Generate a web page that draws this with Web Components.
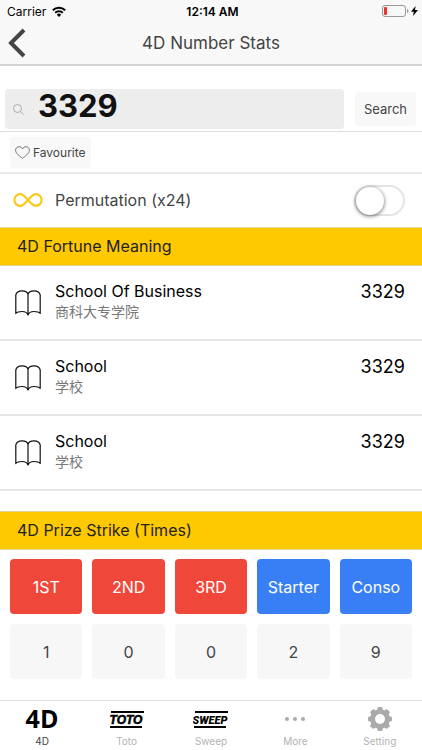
<!DOCTYPE html>
<html lang="en">
<head>
<meta charset="UTF-8">
<meta name="viewport" content="width=device-width, initial-scale=1">
<title>4D Number Stats</title>
<style>
    :root {
        --bar-bg: #f8f8f8;
        --line: #dedede;
        --gold: #ffc900;
        --text: #444;
        --red: #ef473a;
        --blue: #387ef5;
    }

    * { box-sizing: border-box; }

    body {
        margin: 0;
        min-height: 100vh;
        display: flex;
        flex-direction: column;
        background: #fff;
        color: var(--text);
        font-family: Inter, "Noto Sans CJK SC", sans-serif;
        font-size: 16px;
    }

    main { flex: 1; }
</style>
</head>
<body>
    <status-bar carrier="Carrier" time="12:14 AM"></status-bar>
    <nav-header>4D Number Stats</nav-header>
    <main>
        <search-bar value="3329"></search-bar>
        <favourite-bar>Favourite</favourite-bar>
        <toggle-row>Permutation (x24)</toggle-row>
        <section-divider>4D Fortune Meaning</section-divider>
        <meaning-item number="3329">School Of Business<span slot="note" lang="zh">商科大专学院</span></meaning-item>
        <meaning-item number="3329">School<span slot="note" lang="zh">学校</span></meaning-item>
        <meaning-item number="3329">School<span slot="note" lang="zh">学校</span></meaning-item>
        <section-divider class="spaced">4D Prize Strike (Times)</section-divider>
        <prize-grid>
            <prize-cell count="1">1ST</prize-cell>
            <prize-cell count="0">2ND</prize-cell>
            <prize-cell count="0">3RD</prize-cell>
            <prize-cell count="2" color="blue">Starter</prize-cell>
            <prize-cell count="9" color="blue">Conso</prize-cell>
        </prize-grid>
    </main>
    <tab-bar>
        <tab-item active>
            <svg slot="icon" width="40" height="36" viewBox="0 0 40 36"><text x="20" y="27" text-anchor="middle" font-family="Open Sans, sans-serif" font-weight="700" font-size="25" fill="#000">4D</text></svg>
            4D
        </tab-item>
        <tab-item>
            <svg slot="icon" width="36" height="24" viewBox="0 0 36 24"><path d="M2 4h33v2H2zM1 19h32v2H1z"/><text x="17" y="17" text-anchor="middle" font-family="Liberation Sans, sans-serif" font-style="italic" font-weight="700" font-size="12" stroke="#000" stroke-width=".6">TOTO</text></svg>
            Toto
        </tab-item>
        <tab-item>
            <svg slot="icon" width="36" height="24" viewBox="0 0 36 24"><path d="M2 4h33v2H2zM1 19h32v2H1z"/><text x="17" y="17" text-anchor="middle" font-family="Roboto, sans-serif" font-style="italic" font-weight="900" font-size="11">SWEEP</text></svg>
            Sweep
        </tab-item>
        <tab-item>
            <svg slot="icon" width="24" height="24" viewBox="0 0 24 24" fill="#aaa"><circle cx="4" cy="12" r="2"/><circle cx="12" cy="12" r="2"/><circle cx="20" cy="12" r="2"/></svg>
            More
        </tab-item>
        <tab-item>
            <svg slot="icon" width="26" height="26" viewBox="-13 -13 26 26">
                <g fill="#aaa">
                    <path id="cog" d="M-2.8-9.5Q-2.6-12-1.6-12H1.6Q2.6-12 2.8-9.5V9.5Q2.6 12 1.6 12H-1.6Q-2.6 12-2.8 9.5Z"/>
                    <use href="#cog" transform="rotate(45)"/><use href="#cog" transform="rotate(90)"/><use href="#cog" transform="rotate(135)"/>
                    <circle r="9.8"/>
                </g>
                <circle r="5" fill="#fff"/>
            </svg>
            Setting
        </tab-item>
    </tab-bar>

<script>
/**
 * Small base class: attaches the shadow root and fills it once connected.
 */
class BaseElement extends HTMLElement {
    constructor() {
        super();
        this.attachShadow({ mode: 'open' });
    }

    connectedCallback() {
        this.shadowRoot.innerHTML = `
            <style>
                * { box-sizing: border-box; }
                :host { display: block; box-sizing: border-box; }
                button, input { font-family: inherit; color: inherit; margin: 0; border: none; }
                svg { display: block; flex: none; }
            </style>
            ${this.template()}
        `;
    }
}

class StatusBar extends BaseElement {
    template() {
        return `
            <style>
                :host {
                    display: grid;
                    grid-template-columns: 1fr auto 1fr;
                    align-items: center;
                    height: 22px;
                    padding: 0 4px 0 7px;
                    background: var(--bar-bg);
                    color: #000;
                    font-size: 12px;
                }
                .side { display: flex; align-items: center; gap: 6px; }
                .right { justify-content: flex-end; gap: 2px; }
                .time { font-weight: 600; }
            </style>
            <div class="side">
                <span>${this.getAttribute('carrier')}</span>
                <svg width="14" height="11" viewBox="0 0 14 11" fill="none" stroke="#000" stroke-width="2">
                    <path d="M.8 4.2a8.8 8.8 0 0 1 12.4 0M3.2 6.8a5.4 5.4 0 0 1 7.6 0"/>
                    <path d="M7 11 4.8 8.7a3.1 3.1 0 0 1 4.4 0z" fill="#000" stroke="none"/>
                </svg>
            </div>
            <span class="time">${this.getAttribute('time')}</span>
            <div class="side right">
                <svg width="27" height="12" viewBox="0 0 27 12">
                    <rect x=".5" y=".5" width="23" height="11" rx="2.5" fill="none" stroke="#999"/>
                    <rect x="2" y="2" width="3" height="8" rx="1" fill="#f0312b"/>
                    <path d="M25 4q1.5 0 1.5 2T25 8z" fill="#999"/>
                </svg>
                <svg width="7" height="10" viewBox="0 0 7 10"><path d="M4.6 0 0 5.7h2.8L2 10l5-5.9H4z"/></svg>
            </div>
        `;
    }
}

class NavHeader extends BaseElement {
    template() {
        return `
            <style>
                :host {
                    display: grid;
                    grid-template-columns: 44px 1fr 44px;
                    align-items: center;
                    height: 44px;
                    background: var(--bar-bg);
                    border-bottom: 2px solid #d4d4d4;
                }
                button { height: 42px; padding: 0 8px; background: none; }
                h1 { margin: 0; font-size: 17px; font-weight: 400; text-align: center; }
            </style>
            <button aria-label="Back">
                <svg width="18" height="30" viewBox="0 0 18 30" fill="none" stroke="#444" stroke-width="4"><path d="M16 2 3 15l13 13"/></svg>
            </button>
            <h1><slot></slot></h1>
        `;
    }
}

class SearchBar extends BaseElement {
    template() {
        return `
            <style>
                :host { padding: 23px 6px 2px 5px; border-bottom: 1px solid var(--line); }
                form { display: flex; align-items: center; gap: 11px; }
                label {
                    flex: 1;
                    min-width: 0;
                    display: flex;
                    align-items: center;
                    gap: 14px;
                    height: 40px;
                    padding: 0 8px;
                    border-radius: 4px;
                    background: #ededed;
                }
                input {
                    flex: 1;
                    min-width: 0;
                    height: 40px;
                    padding: 0 0 8px;
                    background: none;
                    color: #111;
                    font-size: 31px;
                    font-weight: 700;
                    outline: none;
                }
                button {
                    flex: none;
                    width: 61px;
                    height: 34px;
                    padding: 0;
                    border-radius: 4px;
                    background: var(--bar-bg);
                    font-size: 13px;
                }
            </style>
            <form>
                <label>
                    <svg width="11" height="11" viewBox="0 0 11 11" fill="none" stroke="#aaa"><circle cx="4.5" cy="4.5" r="4"/><path d="m7.5 7.5 3 3"/></svg>
                    <input type="text" aria-label="4D number" value="${this.getAttribute('value')}">
                </label>
                <button type="button">Search</button>
            </form>
        `;
    }
}

class FavouriteBar extends BaseElement {
    template() {
        return `
            <style>
                :host { padding: 5px 10px 4px; border-bottom: 2px solid #e8e8e8; }
                button {
                    display: flex;
                    align-items: center;
                    gap: 3px;
                    height: 31px;
                    padding: 0 5px;
                    border-radius: 4px;
                    background: var(--bar-bg);
                    font-size: 12px;
                }
            </style>
            <button type="button">
                <svg width="15" height="13" viewBox="0 0 15 13" fill="none" stroke="#555" stroke-width=".8"><path d="M7.500 12.300C5 10.400.6 7.400.6 4.200.6 2.200 2.100.7 4 .7c1.500 0 2.800.8 3.500 2.200C8.200 1.500 9.500.7 11 .7c1.900 0 3.400 1.500 3.400 3.500 0 3.200-4.400 6.200-6.900 8.100z"/></svg>
                <slot></slot>
            </button>
        `;
    }
}

class ToggleRow extends BaseElement {
    template() {
        return `
            <style>
                label { display: flex; align-items: center; height: 53px; padding: 0 17px 1px 13px; }
                .text { flex: 1; padding-left: 12px; }
                input {
                    appearance: none;
                    display: flex;
                    width: 51px;
                    height: 31px;
                    border: 2px solid #e4e4e4;
                    border-radius: 16px;
                    background: #fff;
                }
                input::before {
                    content: "";
                    width: 28px;
                    height: 28px;
                    border-radius: 50%;
                    background: #fff;
                    box-shadow: 0 1px 4px rgba(0, 0, 0, .6);
                }
                input:checked { justify-content: flex-end; background: var(--gold); }
            </style>
            <label>
                <svg width="30" height="14" viewBox="0 0 30 14" fill="none" stroke="#fbc81f" stroke-width="2.2" stroke-linecap="round"><path d="M13.5 8.5C11.5 11 10 12.8 7.2 12.8a5.8 5.8 0 0 1 0-11.6C13 1.2 17 12.8 22.8 12.8a5.8 5.8 0 0 0 0-11.6C20 1.2 18.5 3 16.5 5.5"/></svg>
                <span class="text"><slot></slot></span>
                <input type="checkbox" role="switch">
            </label>
        `;
    }
}

class SectionDivider extends BaseElement {
    template() {
        return `
            <style>
                :host {
                    padding: 0 17px;
                    border: 1px solid #e3d49a;
                    border-width: 1px 0;
                    background: var(--gold);
                    color: #222;
                }
                :host(.spaced) { margin-top: 20px; }
                h2 { margin: 0; font-size: 16px; line-height: 37px; font-weight: 400; }
            </style>
            <h2><slot></slot></h2>
        `;
    }
}

class MeaningItem extends BaseElement {
    template() {
        return `
            <style>
                :host {
                    display: flex;
                    gap: 14px;
                    padding: 15px 17px 16px 15px;
                    border-bottom: 2px solid #e6e6e6;
                    color: #000;
                }
                svg { margin-top: 9px; }
                .body { flex: 1; }
                .title { line-height: 20px; }
                .note { line-height: 22px; font-size: 14px; color: #777; }
                .number { line-height: 22px; font-size: 18px; }
            </style>
            <svg width="26" height="26" viewBox="0 0 26 26" fill="none" stroke="#111" stroke-width="1.2" stroke-linejoin="round"><path d="M13 25C12 22 9.5 21.5 7 21.5S2 22 .8 23.5V5C1.5 2 4 .8 7 .8S12.5 2 13 4.5C13.5 2 16 .8 19 .8S24.5 2 25.2 5v18.5C24 22 21.5 21.5 19 21.5S14 22 13 25zM13 4.5V24"/></svg>
            <div class="body">
                <div class="title"><slot></slot></div>
                <div class="note"><slot name="note"></slot></div>
            </div>
            <div class="number">${this.getAttribute('number')}</div>
        `;
    }
}

class PrizeGrid extends BaseElement {
    template() {
        return `
            <style>
                :host { display: grid; grid-template-columns: repeat(5, 1fr); gap: 10px; padding: 9px 10px 20px; }
            </style>
            <slot></slot>
        `;
    }
}

class PrizeCell extends BaseElement {
    template() {
        return `
            <style>
                :host { display: grid; gap: 10px; text-align: center; --cell: var(--red); }
                :host([color="blue"]) { --cell: var(--blue); }
                button, output { height: 55px; padding: 0; border-radius: 4px; font-size: 16px; }
                button { background: var(--cell); color: #fff; }
                output { line-height: 56px; background: #f7f7f7; }
            </style>
            <button type="button"><slot></slot></button>
            <output>${this.getAttribute('count')}</output>
        `;
    }
}

class TabBar extends BaseElement {
    template() {
        return `
            <style>
                :host { border-top: 1px solid var(--line); background: #fff; }
                nav { display: grid; grid-template-columns: repeat(5, 1fr); }
            </style>
            <nav><slot></slot></nav>
        `;
    }
}

class TabItem extends BaseElement {
    template() {
        return `
            <style>
                a {
                    display: flex;
                    flex-direction: column;
                    align-items: center;
                    height: 49px;
                    padding-top: 4px;
                    color: #b2b2b2;
                    font-size: 10px;
                    line-height: 16px;
                    text-decoration: none;
                }
                :host([active]) a { color: #444; }
                .icon { display: flex; align-items: center; height: 28px; }
            </style>
            <a href="#"><span class="icon"><slot name="icon"></slot></span><span><slot></slot></span></a>
        `;
    }
}

// Register Components
customElements.define('status-bar', StatusBar);
customElements.define('nav-header', NavHeader);
customElements.define('search-bar', SearchBar);
customElements.define('favourite-bar', FavouriteBar);
customElements.define('toggle-row', ToggleRow);
customElements.define('section-divider', SectionDivider);
customElements.define('meaning-item', MeaningItem);
customElements.define('prize-grid', PrizeGrid);
customElements.define('prize-cell', PrizeCell);
customElements.define('tab-bar', TabBar);
customElements.define('tab-item', TabItem);
</script>
</body>
</html>
